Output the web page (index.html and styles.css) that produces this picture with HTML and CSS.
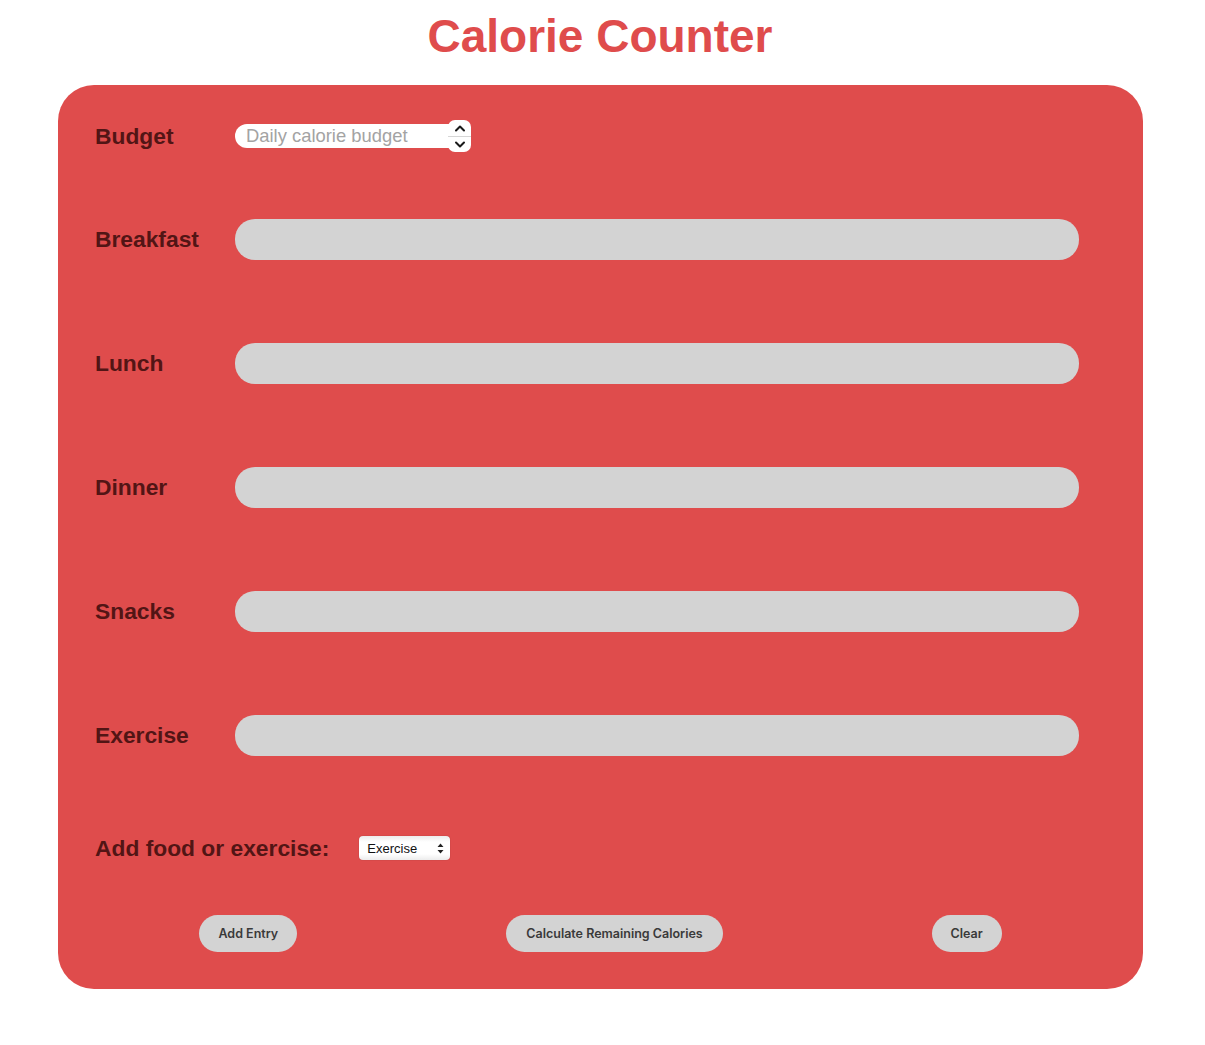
FILE: index.html
```
<!DOCTYPE html>
<html lang="en">
<head>
<meta charset="utf-8">
<title>Calorie Counter</title>
<link rel="stylesheet" href="styles.css">
</head>
<body>
<h1 class="title">Calorie Counter</h1>
<main class="card">
  <div class="row row-budget">
    <label class="label" for="budget">Budget</label>
    <div class="budget-wrap">
      <input class="budget-input" id="budget" type="text" placeholder="Daily calorie budget">
      <span class="spinner">
        <svg class="chev" width="12" height="8" viewBox="0 0 12 8"><path d="M2 6.5 L6 2.5 L10 6.5" fill="none" stroke="#1a1a1a" stroke-width="2" stroke-linecap="round" stroke-linejoin="round"/></svg>
        <span class="spin-sep"></span>
        <svg class="chev" width="12" height="8" viewBox="0 0 12 8"><path d="M2 1.5 L6 5.5 L10 1.5" fill="none" stroke="#1a1a1a" stroke-width="2" stroke-linecap="round" stroke-linejoin="round"/></svg>
      </span>
    </div>
  </div>
  <div class="row row-field">
    <label class="label" for="breakfast">Breakfast</label>
    <input class="field" id="breakfast" type="text">
  </div>
  <div class="row row-field">
    <label class="label" for="lunch">Lunch</label>
    <input class="field" id="lunch" type="text">
  </div>
  <div class="row row-field">
    <label class="label" for="dinner">Dinner</label>
    <input class="field" id="dinner" type="text">
  </div>
  <div class="row row-field">
    <label class="label" for="snacks">Snacks</label>
    <input class="field" id="snacks" type="text">
  </div>
  <div class="row row-field">
    <label class="label" for="exercise">Exercise</label>
    <input class="field" id="exercise" type="text">
  </div>
  <div class="row row-add">
    <label class="label label-add" for="entry-type">Add food or exercise:</label>
    <div class="select-wrap">
      <select class="select" id="entry-type">
        <option>Exercise</option>
      </select>
      <svg class="select-arrows" width="7" height="11" viewBox="0 0 7 11"><path d="M3.5 0.5 L6.5 4 L0.5 4 Z M3.5 10.5 L6.5 7 L0.5 7 Z" fill="#222"/></svg>
    </div>
  </div>
  <div class="buttons">
    <button class="btn btn-add" type="button">Add Entry</button>
    <button class="btn btn-calc" type="button">Calculate Remaining Calories</button>
    <button class="btn btn-clear" type="button">Clear</button>
  </div>
</main>
</body>
</html>
```
FILE: styles.css
```
* { box-sizing: border-box; }
body {
  margin: 0;
  background: #ffffff;
  font-family: "Liberation Sans", Arial, sans-serif;
}
.title {
  margin: 11px 0 23px;
  padding-right: 5px;
  text-align: center;
  font-size: 46px;
  font-weight: bold;
  color: #df4c4c;
  line-height: 51px;
}
.card {
  margin: 0 62px 0 58px;
  width: 1085px;
  background: #df4c4c;
  border-radius: 36px;
  padding: 35px 37px 37px;
}
.row {
  display: flex;
  align-items: center;
}
.label {
  width: 140px;
  flex: none;
  font-size: 22.8px;
  font-weight: bold;
  color: #521515;
}
.row-budget { height: 32px; }
.row-field { height: 41px; margin-top: 83px; }
.row-budget + .row-field { margin-top: 67px; }
.budget-wrap {
  position: relative;
  width: 236px;
  height: 24px;
}
.budget-input {
  width: 236px;
  height: 24px;
  border: none;
  border-radius: 12px;
  background: #fff;
  padding: 0 11px;
  font-family: "Liberation Sans", Arial, sans-serif;
  font-size: 18.4px;
  outline: none;
}
.budget-input::placeholder { color: #a3a3a3; }
.spinner {
  position: absolute;
  right: 0;
  top: -4px;
  width: 23px;
  height: 32px;
  background: #fff;
  border-radius: 7px;
  display: flex;
  flex-direction: column;
  align-items: center;
  justify-content: space-between;
  padding: 4px 0 3px;
}
.spin-sep {
  width: 23px;
  height: 1px;
  background: #d6d6d6;
}
.field {
  width: 844px;
  height: 41px;
  border: none;
  border-radius: 20px;
  background: #d3d3d3;
  outline: none;
}
.row-add { height: 24px; margin-top: 80px; }
.label-add { width: auto; margin-right: 30px; }
.select-wrap {
  position: relative;
  width: 91px;
  height: 24px;
}
.select {
  appearance: none;
  -webkit-appearance: none;
  width: 91px;
  height: 24px;
  border: none;
  border-radius: 4px;
  background: linear-gradient(#ececec, #ffffff 25%, #ffffff 75%, #ececec);
  box-shadow: 0 0 1px rgba(0,0,0,0.4);
  font-family: "Liberation Sans", Arial, sans-serif;
  font-size: 13px;
  color: #111;
  padding: 0 8px;
  outline: none;
}
.select-arrows {
  position: absolute;
  right: 6px;
  top: 7px;
  pointer-events: none;
}
.buttons {
  display: flex;
  justify-content: space-around;
  margin-top: 55px;
}
.btn {
  height: 37px;
  border: none;
  border-radius: 19px;
  background: #d3d3d3;
  color: #3a3a3a;
  font-family: Inter, "Liberation Sans", sans-serif;
  font-size: 12.5px;
  font-weight: 600;
  padding: 0;
}
.btn-add { width: 98px; }
.btn-calc { width: 217px; }
.btn-clear { width: 70px; }
```
